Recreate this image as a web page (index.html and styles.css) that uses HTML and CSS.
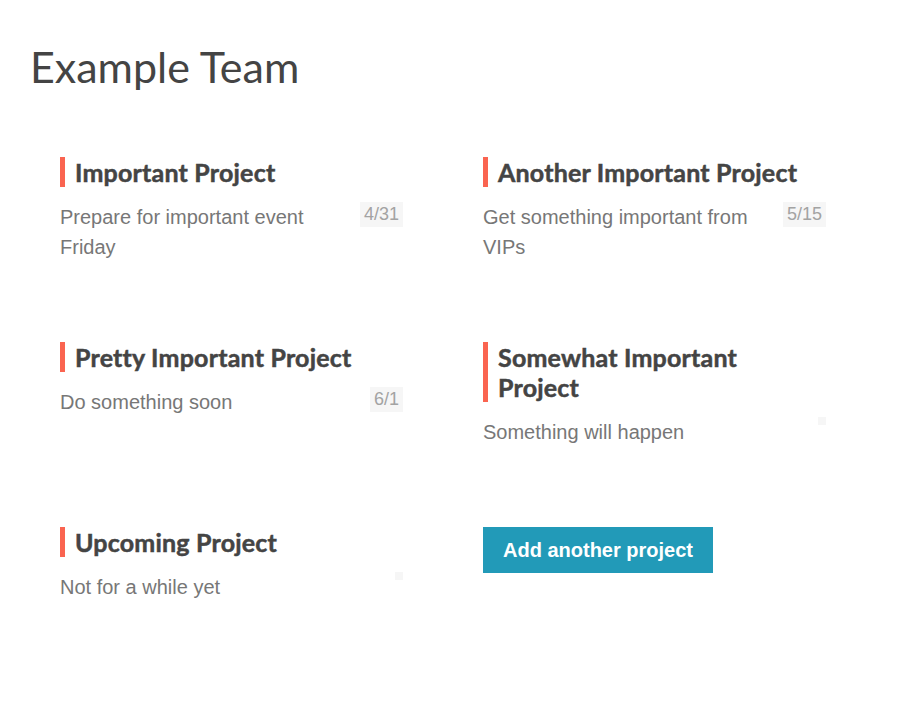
FILE: index.html
```html
<!DOCTYPE html>
<html>
<head>
<meta charset="utf-8">
<link rel="stylesheet" href="styles.css">
</head>
<body>
<div class="page">
  <h1 class="team-title">Example Team</h1>
  <div class="projects">
    <div class="project">
      <h2 class="project-title">Important Project</h2>
      <div class="project-body">
        <p class="project-desc">Prepare for important event Friday</p>
        <span class="badge">4/31</span>
      </div>
    </div>
    <div class="project">
      <h2 class="project-title">Another Important Project</h2>
      <div class="project-body">
        <p class="project-desc">Get something important from VIPs</p>
        <span class="badge">5/15</span>
      </div>
    </div>
    <div class="project">
      <h2 class="project-title">Pretty Important Project</h2>
      <div class="project-body">
        <p class="project-desc">Do something soon</p>
        <span class="badge">6/1</span>
      </div>
    </div>
    <div class="project">
      <h2 class="project-title">Somewhat Important Project</h2>
      <div class="project-body">
        <p class="project-desc">Something will happen</p>
        <span class="badge"></span>
      </div>
    </div>
    <div class="project">
      <h2 class="project-title">Upcoming Project</h2>
      <div class="project-body">
        <p class="project-desc">Not for a while yet</p>
        <span class="badge"></span>
      </div>
    </div>
    <div class="project">
      <button class="add-btn">Add another project</button>
    </div>
  </div>
</div>
</body>
</html>
```

FILE: styles.css
```css
* { box-sizing: border-box; }
html, body { margin: 0; padding: 0; background: #fff; }
body { font-family: "Liberation Sans", Arial, sans-serif; }
.page { padding: 30px 30px 0 30px; }
.team-title {
  font-family: Lato, "Open Sans", sans-serif;
  font-weight: 400;
  font-size: 43px;
  line-height: 1;
  color: #444;
  margin: 15px 0 0 0;
}
.projects {
  display: grid;
  grid-template-columns: 343px 343px;
  column-gap: 80px;
  row-gap: 80px;
  margin: 69px 0 0 30px;
}
.project { min-width: 0; }
.project-title {
  font-family: Lato, "Open Sans", sans-serif;
  font-weight: 700;
  font-size: 25px;
  line-height: 30px;
  letter-spacing: 0.2px;
  color: #444;
  -webkit-text-stroke: 0.5px #444;
  margin: 0 0 15px 0;
  padding-left: 10px;
  border-left: 5px solid #fa6450;
  max-width: 320px;
}
.project-body {
  display: flex;
  justify-content: space-between;
  align-items: flex-start;
  gap: 20px;
}
.project-desc {
  margin: 0;
  font-size: 20px;
  line-height: 30px;
  color: #777;
}
.badge {
  flex: none;
  background: #f6f6f6;
  color: #a3a3a3;
  font-size: 18px;
  line-height: 17px;
  padding: 4px;
}
.add-btn {
  display: inline-block;
  border: none;
  background: #229ab8;
  color: #fff;
  font-family: "Liberation Sans", Arial, sans-serif;
  font-weight: 700;
  font-size: 20px;
  line-height: 26px;
  padding: 10px 20px;
  margin: 0;
  cursor: pointer;
}
```
